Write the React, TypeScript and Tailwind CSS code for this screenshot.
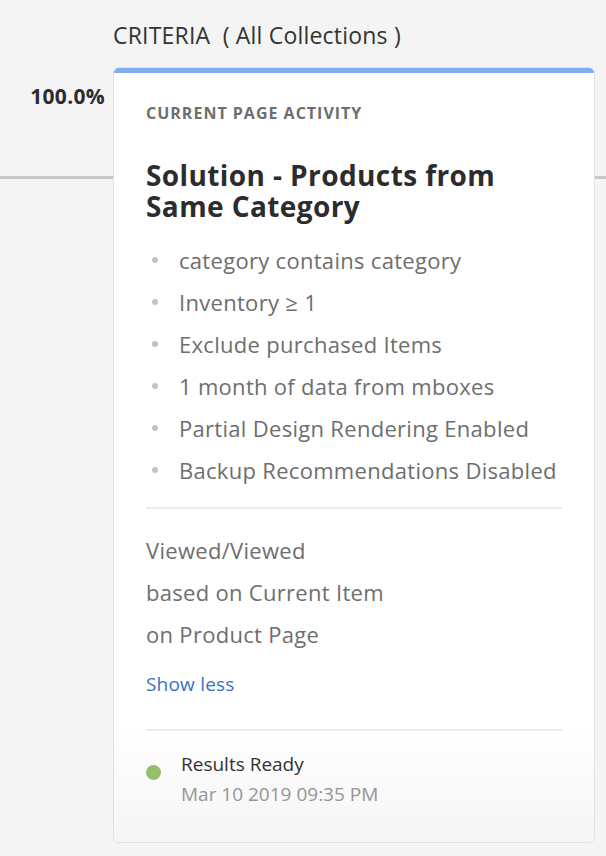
const criteria = [
  "category contains category",
  "Inventory ≥ 1",
  "Exclude purchased Items",
  "1 month of data from mboxes",
  "Partial Design Rendering Enabled",
  "Backup Recommendations Disabled",
];

const details = ["Viewed/Viewed", "based on Current Item", "on Product Page"];

export default function App() {
  return (
    <div
      className="min-h-[856px] w-[606px] overflow-hidden bg-[#f4f4f4] text-[#2c2c2c]"
      style={{ fontFamily: "'Open Sans', Lato, sans-serif" }}
    >
      <div className="pl-[113px] pt-[21px] text-[23px] leading-[28px] tracking-[0.2px] text-[#333]">
        CRITERIA&nbsp;&nbsp;( All Collections )
      </div>

      <div className="mt-[18px] flex">
        {/* left gutter */}
        <div className="w-[113px] shrink-0">
          <div className="pr-[8px] pt-[17px] text-right text-[21px] font-bold leading-[24px] tracking-[0.3px] text-[#2c2c2c]">
            100.0%
          </div>
          <div className="mt-[68px] h-[3px] w-full bg-[#c8c8c8]" />
        </div>

        {/* card */}
        <div className="w-[482px] shrink-0 overflow-hidden rounded-[6px] border border-[#e2e2e2] bg-gradient-to-b from-white from-85% to-[#f5f5f5]">
          <div className="h-[5px] bg-[#80abf6]" />
          <div className="px-[32px] pb-[33px] pt-[31px]">
            <div className="text-[16px] font-bold uppercase leading-[18px] tracking-[1px] text-[#6e6e6e]">
              Current Page Activity
            </div>

            <h2 className="mt-[38px] text-[28px] font-bold leading-[31px] tracking-[0.4px] text-[#2c2c2c]">
              Solution - Products from
              <br />
              Same Category
            </h2>

            <ul className="mt-[17px] flex flex-col">
              {criteria.map((c) => (
                <li
                  key={c}
                  className="flex h-[42px] items-center text-[22px] tracking-[0.3px] text-[#6e6e6e]"
                >
                  <span className="ml-[6px] mr-[21px] h-[6px] w-[6px] rounded-full bg-[#c2c2c2]" />
                  {c}
                </li>
              ))}
            </ul>

            <div className="mt-[16px] h-[2px] w-[416px] bg-[#ececec]" />

            <div className="mt-[20px] flex flex-col">
              {details.map((d) => (
                <div
                  key={d}
                  className="flex h-[42px] items-center text-[22px] tracking-[0.3px] text-[#6e6e6e]"
                >
                  {d}
                </div>
              ))}
            </div>

            <div className="mt-[15px] text-[19px] leading-[28px] tracking-[0.2px] text-[#3a6fc9]">
              Show less
            </div>

            <div className="mt-[31px] h-[2px] w-[416px] bg-[#ececec]" />

            <div className="mt-[18px] flex items-start">
              <span className="mt-[16px] h-[15px] w-[15px] shrink-0 rounded-full bg-[#93bf6a]" />
              <div className="ml-[20px] flex flex-col">
                <span className="text-[19px] leading-[30px] text-[#333]">
                  Results Ready
                </span>
                <span className="text-[19px] leading-[30px] text-[#959595]">
                  Mar 10 2019 09:35 PM
                </span>
              </div>
            </div>
          </div>
        </div>

        {/* right gutter */}
        <div className="flex-1">
          <div className="mt-[109px] h-[3px] w-full bg-[#c8c8c8]" />
        </div>
      </div>
    </div>
  );
}
